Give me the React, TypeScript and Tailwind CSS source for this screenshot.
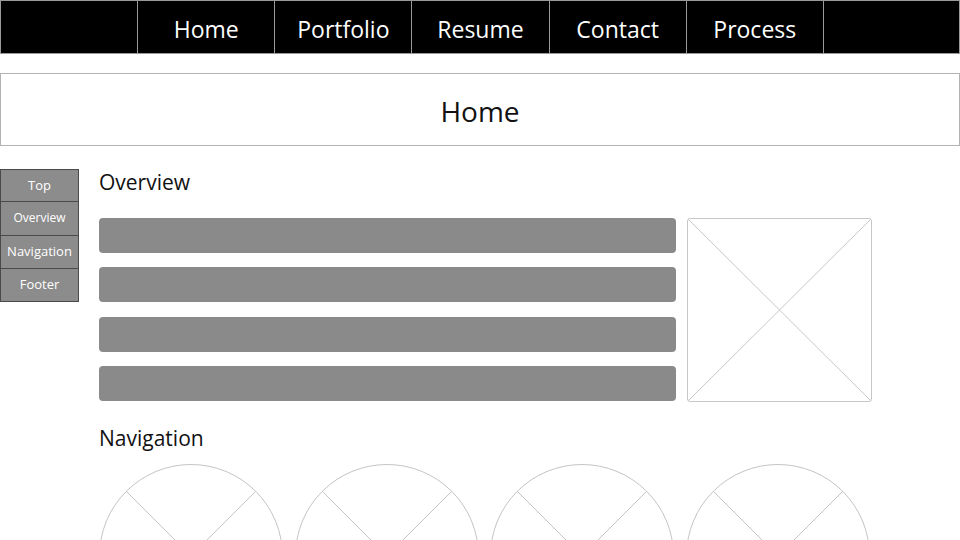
import React from "react";

const font = { fontFamily: '"Open Sans", "Noto Sans", sans-serif' };

function CircleX() {
  const r = 91.5;
  const c = 92;
  const d = r * Math.SQRT1_2;
  return (
    <svg width="184" height="184" viewBox="0 0 184 184" className="block shrink-0">
      <circle cx={c} cy={c} r={r} fill="white" stroke="#c4c4c4" strokeWidth="1" />
      <line x1={c - d} y1={c - d} x2={c + d} y2={c + d} stroke="#c4c4c4" strokeWidth="1" />
      <line x1={c + d} y1={c - d} x2={c - d} y2={c + d} stroke="#c4c4c4" strokeWidth="1" />
    </svg>
  );
}

export default function App() {
  const nav = ["", "Home", "Portfolio", "Resume", "Contact", "Process", ""];
  const side = [
    { t: "Top", s: "text-[13px]" },
    { t: "Overview", s: "text-[12px]" },
    { t: "Navigation", s: "text-[13px]" },
    { t: "Footer", s: "text-[13px]" },
  ];
  return (
    <div className="w-[960px] h-[540px] overflow-hidden bg-white" style={font}>
      <div className="grid grid-cols-7 h-[54px] bg-black">
        {nav.map((n, i) => (
          <div
            key={i}
            className={`flex items-center justify-center pt-[4px] text-white text-[23px] border-y border-l border-[#9a9a9a] ${i === 6 ? "border-r" : ""}`}
          >
            {n}
          </div>
        ))}
      </div>
      <div className="mt-[19px] h-[73px] pt-[3px] border border-[#b4b4b4] flex items-center justify-center text-[28px] text-[#111]">
        Home
      </div>
      <div className="flex mt-[23px]">
        <div className="w-[79px] shrink-0 flex flex-col">
          {side.map((s, i) => (
            <div
              key={i}
              className={`h-[33.25px] flex items-center justify-center bg-[#8c8c8c] text-white border-x border-b border-[#4a4a4a] ${i === 0 ? "border-t" : ""} ${s.s}`}
            >
              {s.t}
            </div>
          ))}
        </div>
        <div className="ml-[20px] w-[773px] flex flex-col">
          <div className="h-[28px] flex items-center text-[21px] text-[#111]">Overview</div>
          <div className="mt-[21px] flex gap-[11px]">
            <div className="w-[577px] flex flex-col gap-[14.3px]">
              {[0, 1, 2, 3].map((i) => (
                <div key={i} className="h-[35px] rounded-[4px] bg-[#8a8a8a]" />
              ))}
            </div>
            <div className="w-[185px] h-[184px] relative border border-[#c8c8c8] rounded-[3px]">
              <svg className="absolute inset-0 w-full h-full" viewBox="0 0 183 182" preserveAspectRatio="none">
                <line x1="0" y1="0" x2="183" y2="182" stroke="#c8c8c8" strokeWidth="1" />
                <line x1="183" y1="0" x2="0" y2="182" stroke="#c8c8c8" strokeWidth="1" />
              </svg>
            </div>
          </div>
          <div className="mt-[23px] h-[28px] flex items-center text-[21px] text-[#111]">Navigation</div>
          <div className="mt-[11px] flex gap-[11.6px]">
            {[0, 1, 2, 3].map((i) => (
              <CircleX key={i} />
            ))}
          </div>
        </div>
      </div>
    </div>
  );
}
